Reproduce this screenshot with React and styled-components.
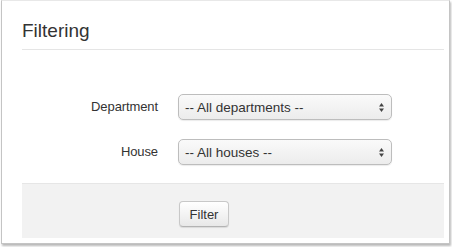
import React from "react";
import styled, { createGlobalStyle } from "styled-components";

const Global = createGlobalStyle`
  html, body { margin: 0; padding: 0; background: #ffffff; }
  body { font-family: "Liberation Sans", Arial, sans-serif; color: #333; }
`;

const Page = styled.div`
  width: 452px;
  height: 247px;
  padding-left: 1px;
  box-sizing: border-box;
  background: #fff;
`;

const Panel = styled.div`
  width: 449px;
  height: 244px;
  box-sizing: border-box;
  background: #fff;
  border: 1px solid #c4c4c4;
  border-top-color: #e8e8e8;
  box-shadow: 1px 2px 2px rgba(0, 0, 0, 0.28);
  padding: 0 5px 0 20px;
  display: flex;
  flex-direction: column;
`;

const Heading = styled.h2`
  margin: 0;
  padding: 19px 0 7px;
  font-size: 19px;
  line-height: 22px;
  font-weight: normal;
  color: #333;
  border-bottom: 1px solid #e5e5e5;
`;

const Form = styled.div`
  display: grid;
  grid-template-columns: 136px 214px;
  column-gap: 20px;
  row-gap: 19px;
  padding-top: 44px;
  align-items: center;
`;

const Label = styled.label`
  text-align: right;
  font-size: 13px;
  line-height: 26px;
  color: #333;
  letter-spacing: -0.1px;
`;

const Select = styled.div`
  height: 26px;
  box-sizing: border-box;
  border: 1px solid #bdbdbd;
  border-radius: 5px;
  background: linear-gradient(#fafafa, #ececec);
  box-shadow: 0 1px 1px rgba(0, 0, 0, 0.08);
  display: flex;
  align-items: center;
  justify-content: space-between;
  padding: 0 6px 0 6px;
  font-size: 13.5px;
  color: #333;
`;

const Arrows = styled.svg`
  width: 5px;
  height: 9px;
  margin-right: 1px;
`;

const Actions = styled.div`
  margin-top: 18px;
  height: 55px;
  box-sizing: border-box;
  background: #f2f2f2;
  border-top: 1px solid #e6e6e6;
  padding: 17px 0 0 157px;
`;

const Button = styled.button`
  width: 50px;
  height: 26px;
  padding: 0;
  font-family: "Liberation Sans", Arial, sans-serif;
  font-size: 13px;
  color: #333;
  border: 1px solid #c8c8c8;
  border-bottom-color: #b3b3b3;
  border-radius: 4px;
  background: linear-gradient(#ffffff, #e8e8e8);
  box-shadow: 0 1px 1px rgba(0, 0, 0, 0.1);
`;

const SelectArrows = () => (
  <Arrows viewBox="0 0 5 9">
    <path d="M2.5 0 L5 3.5 L0 3.5 Z" fill="#444" />
    <path d="M0 5.5 L5 5.5 L2.5 9 Z" fill="#444" />
  </Arrows>
);

export default function App() {
  return (
    <Page>
      <Global />
      <Panel>
        <Heading>Filtering</Heading>
        <Form>
          <Label>Department</Label>
          <Select>
            <span>-- All departments --</span>
            <SelectArrows />
          </Select>
          <Label>House</Label>
          <Select>
            <span>-- All houses --</span>
            <SelectArrows />
          </Select>
        </Form>
        <Actions>
          <Button>Filter</Button>
        </Actions>
      </Panel>
    </Page>
  );
}
